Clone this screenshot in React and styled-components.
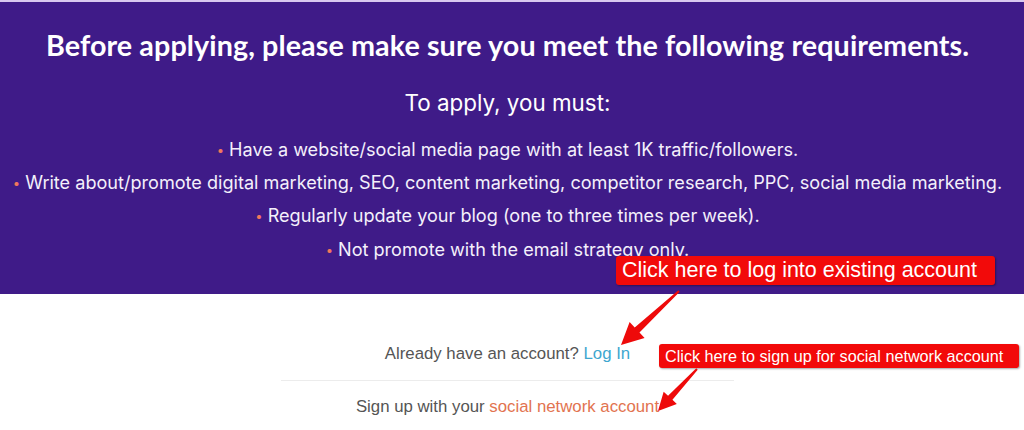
import React from 'react'
import styled, { createGlobalStyle } from 'styled-components'

const GlobalStyle = createGlobalStyle`
  html, body {
    margin: 0;
    padding: 0;
    background: #ffffff;
  }
`

const Page = styled.div`
  position: relative;
  width: 1024px;
  height: 430px;
  overflow: hidden;
  background: #ffffff;
  border-top: 2px solid #d8c8ef;
  box-sizing: border-box;
`

const Banner = styled.section`
  height: 292px;
  box-sizing: border-box;
  background: #3f1b88;
  display: flex;
  flex-direction: column;
  align-items: center;
  padding: 26px 9px 0 0;
  color: #ffffff;
`

const Heading = styled.h1`
  margin: 0;
  font-family: Lato, "Open Sans", sans-serif;
  font-weight: 700;
  font-size: 28.7px;
  line-height: 34px;
  letter-spacing: 0.1px;
  white-space: nowrap;
`

const SubHeading = styled.h2`
  margin: 27px 0 0;
  font-family: Inter, "Noto Sans", sans-serif;
  font-weight: 400;
  font-size: 22.4px;
  line-height: 28px;
`

const Bullets = styled.ul`
  list-style: none;
  margin: 16px 0 0;
  padding: 0;
  display: flex;
  flex-direction: column;
  align-items: center;
  font-family: Inter, "Noto Sans", sans-serif;
  font-size: 18.1px;
  line-height: 32.2px;
  color: #f4f0fb;
  white-space: nowrap;
`

const Bullet = styled.li`
  &::before {
    content: "•";
    color: #f0785c;
    font-size: 13px;
    margin-right: 5px;
    vertical-align: 1px;
  }
`

const Account = styled.section`
  display: flex;
  flex-direction: column;
  align-items: center;
  padding: 49px 9px 0 0;
  font-family: "Liberation Sans", Arial, sans-serif;
  font-size: 16.8px;
  color: #555555;
`

const Line = styled.p`
  margin: 0;
  line-height: 22px;
`

const Divider = styled.hr`
  width: 453px;
  margin: 15px 0 15px;
  border: 0;
  border-top: 1px solid #ececec;
`

const Link = styled.a`
  color: ${p => p.$tone === 'blue' ? '#3ea7cf' : '#e27350'};
  text-decoration: none;
`

const Callout = styled.div`
  position: absolute;
  left: ${p => p.$x}px;
  top: ${p => p.$y}px;
  width: ${p => p.$w}px;
  height: ${p => p.$h}px;
  box-sizing: border-box;
  background: #f20a0a;
  border-radius: 3px;
  box-shadow: 1px 1px 2px rgba(0, 0, 0, 0.35);
  color: #ffffff;
  font-family: "Liberation Sans", Arial, sans-serif;
  font-size: ${p => p.$size}px;
  line-height: ${p => p.$h}px;
  padding-left: ${p => p.$pad}px;
  white-space: nowrap;
`

const Overlay = styled.svg`
  position: absolute;
  left: 0;
  top: 0;
  pointer-events: none;
`

function arrowPoints(x1, y1, x2, y2, shaft, headL, headW) {
  const dx = x2 - x1
  const dy = y2 - y1
  const len = Math.hypot(dx, dy)
  const ux = dx / len
  const uy = dy / len
  const nx = -uy
  const ny = ux
  const bx = x2 - ux * headL
  const by = y2 - uy * headL
  const pts = [
    [x1 + nx * 1, y1 + ny * 1],
    [bx + nx * shaft / 2, by + ny * shaft / 2],
    [bx + nx * headW / 2, by + ny * headW / 2],
    [x2, y2],
    [bx - nx * headW / 2, by - ny * headW / 2],
    [bx - nx * shaft / 2, by - ny * shaft / 2],
    [x1 - nx * 1, y1 - ny * 1],
  ]
  return pts.map(p => p.join(',')).join(' ')
}

export default function App() {
  return (
    <Page>
      <GlobalStyle />
      <Banner>
        <Heading>Before applying, please make sure you meet the following requirements.</Heading>
        <SubHeading>To apply, you must:</SubHeading>
        <Bullets>
          <Bullet>Have a website/social media page with at least 1K traffic/followers.</Bullet>
          <Bullet>Write about/promote digital marketing, SEO, content marketing, competitor research, PPC, social media marketing.</Bullet>
          <Bullet>Regularly update your blog (one to three times per week).</Bullet>
          <Bullet>Not promote with the email strategy only.</Bullet>
        </Bullets>
      </Banner>
      <Account>
        <Line>Already have an account? <Link $tone="blue">Log In</Link></Line>
        <Divider />
        <Line>Sign up with your <Link $tone="orange">social network account</Link></Line>
      </Account>

      <Callout $x={616} $y={254} $w={379} $h={29} $size={21.5} $pad={6}>
        Click here to log into existing account
      </Callout>
      <Callout $x={659} $y={342} $w={360} $h={24} $size={16.2} $pad={6}>
        Click here to sign up for social network account
      </Callout>
      <Overlay width="1024" height="430">
        <polygon points={arrowPoints(679, 289, 621, 343, 7, 22, 22)} fill="#ee0a0a" />
        <polygon points={arrowPoints(697, 367, 658, 409, 6, 18, 18)} fill="#ee0a0a" />
      </Overlay>
    </Page>
  )
}
